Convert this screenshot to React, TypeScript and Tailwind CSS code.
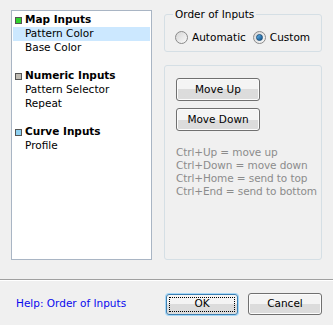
import React from 'react'

const groups = [
  { title: 'Map Inputs', color: 'bg-[#2fd32f]', items: ['Pattern Color', 'Base Color'] },
  { title: 'Numeric Inputs', color: 'bg-[#c0bcb4]', items: ['Pattern Selector', 'Repeat'] },
  { title: 'Curve Inputs', color: 'bg-[#8fd0f0]', items: ['Profile'] },
]

function Radio({ checked, label }: { checked?: boolean; label: string }) {
  return (
    <label className="flex items-center gap-[4px]">
      <span className="w-[13px] h-[13px] rounded-full border border-[#8a8a8a] bg-gradient-to-br from-[#d6d6d6] to-[#fafafa] flex items-center justify-center">
        {checked && (
          <span className="w-[7px] h-[7px] rounded-full bg-gradient-to-br from-[#63b8f0] to-[#0e4f86] border border-[#1a4f7a]" />
        )}
      </span>
      <span>{label}</span>
    </label>
  )
}

function Btn({ children, className = '' }: { children: React.ReactNode; className?: string }) {
  return (
    <button
      type="button"
      className={`rounded-[3px] border border-[#707070] bg-gradient-to-b from-[#f4f4f4] from-50% to-[#dcdcdc] to-50% text-black shadow-[inset_0_0_0_1px_#fcfcfc] ${className}`}
    >
      {children}
    </button>
  )
}

export default function App() {
  return (
    <div
      className="w-[333px] h-[325px] bg-[#f0f0f0] text-[10.5px] text-black flex flex-col"
      style={{ fontFamily: '"DejaVu Sans", Verdana, sans-serif' }}
    >
      <div className="flex pl-[11px] pt-[10px] h-[270px]">
        {/* Inputs list */}
        <div className="w-[141px] h-[250px] bg-white border border-[#a9b5c4] pt-[2px] px-px">
          {groups.map((g, gi) => (
            <div key={g.title} className={gi < groups.length - 1 ? 'mb-[14px]' : ''}>
              <div className="h-[14px] flex items-center font-bold pl-[2px]">
                <span className={`w-[7px] h-[7px] border border-[#555] ${g.color} mr-[3px]`} />
                {g.title}
              </div>
              {g.items.map(it => (
                <div
                  key={it}
                  className={`h-[14px] flex items-center pl-[12px] ${it === 'Pattern Color' ? 'bg-[#cce8ff]' : ''}`}
                >
                  {it}
                </div>
              ))}
            </div>
          ))}
        </div>

        <div className="ml-[12px] w-[158px] flex flex-col">
          {/* Order of Inputs */}
          <fieldset className="h-[45px] border border-[#d5dfe5] rounded-[3px] mt-[-3px] px-[10px] pt-[1px]">
            <legend className="px-[2px] ml-[-2px]">Order of Inputs</legend>
            <div className="flex items-center gap-[7px] mt-[6px]">
              <Radio label="Automatic" />
              <Radio checked label="Custom" />
            </div>
          </fieldset>

          {/* Move panel */}
          <div className="mt-[13px] h-[195px] border border-[#d5dfe5] rounded-[3px] px-[11px] pt-[12px] whitespace-nowrap">
            <Btn className="w-[84px] h-[23px] block">Move Up</Btn>
            <Btn className="w-[84px] h-[23px] block mt-[7px]">Move Down</Btn>
            <div className="mt-[15px] text-[#8c8c8c] leading-[13px] tracking-[-0.1px]">
              <div>Ctrl+Up = move up</div>
              <div>Ctrl+Down = move down</div>
              <div>Ctrl+Home = send to top</div>
              <div>Ctrl+End = send to bottom</div>
            </div>
          </div>
        </div>
      </div>

      <div className="mt-[9px] border-t border-[#a0a0a0] border-b border-b-white" />

      <div className="flex items-center pl-[16px] pr-[11px] mt-[12px]">
        <span className="text-[#0a0aee] flex-1">Help: Order of Inputs</span>
        <button
          type="button"
          className="w-[72px] h-[21px] rounded-[3px] border border-[#3c7fb1] bg-gradient-to-b from-[#f4f4f4] from-50% to-[#dcdcdc] to-50% shadow-[0_0_0_1px_#a6d8f8] p-[2px]"
        >
          <span className="w-full h-full border border-dotted border-black flex items-center justify-center">OK</span>
        </button>
        <Btn className="w-[74px] h-[22px] ml-[10px]">Cancel</Btn>
      </div>
    </div>
  )
}
